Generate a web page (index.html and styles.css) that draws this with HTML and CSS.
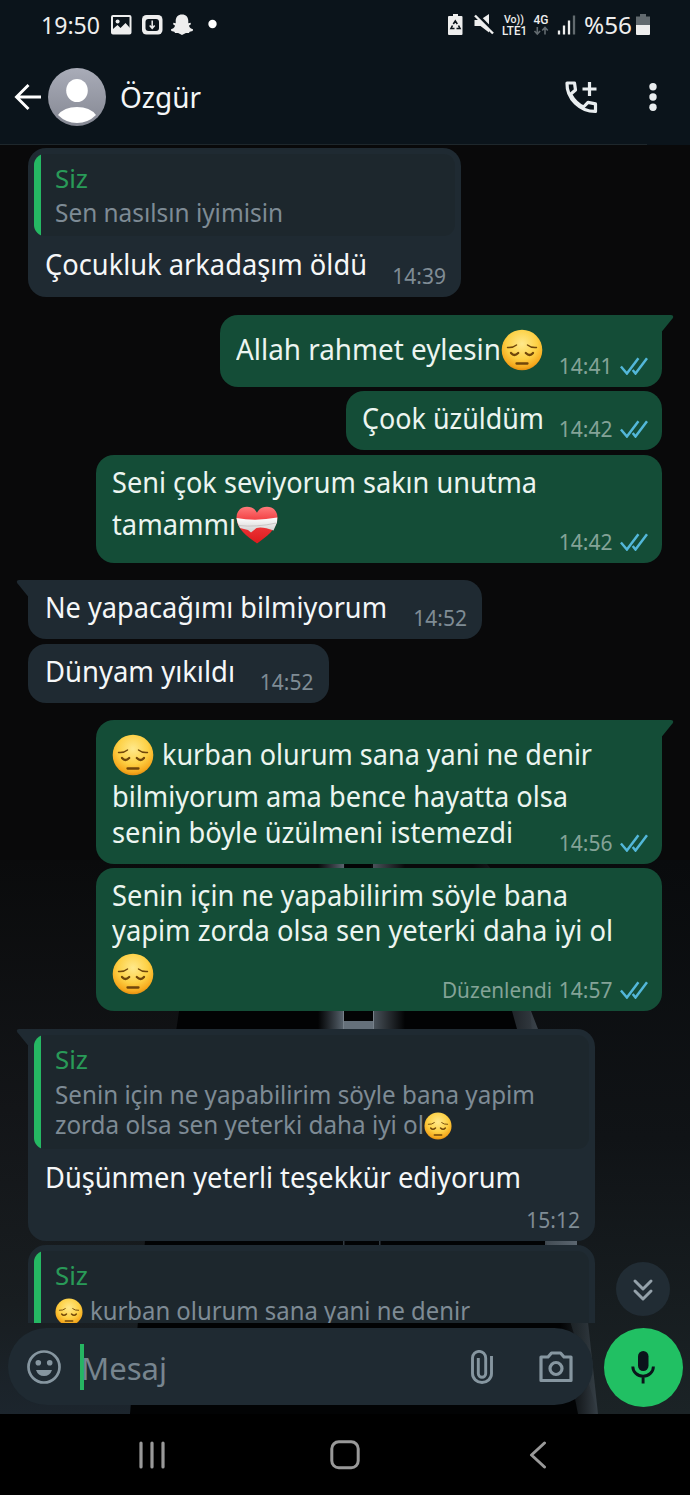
FILE: index.html
```html
<!DOCTYPE html>
<html lang="tr">
<head>
<meta charset="utf-8">
<title>Özgür</title>
<link rel="stylesheet" href="styles.css">
</head>
<body>
<svg class="defs" width="0" height="0" aria-hidden="true">
  <defs>
    <radialGradient id="face" cx="50%" cy="35%" r="68%">
      <stop offset="0" stop-color="#ffe98c"/><stop offset=".55" stop-color="#fdd044"/><stop offset=".85" stop-color="#f6a91d"/><stop offset="1" stop-color="#d9820c"/>
    </radialGradient>
    <linearGradient id="red" x1="0" y1="0" x2="0" y2="1"><stop offset="0" stop-color="#ff7b7b"/><stop offset=".4" stop-color="#f13b3e"/><stop offset="1" stop-color="#dd1a1d"/></linearGradient>
    <linearGradient id="band" x1="0" y1="0" x2="0" y2="1"><stop offset="0" stop-color="#fff"/><stop offset="1" stop-color="#cfcdcd"/></linearGradient>
    <linearGradient id="avatar" x1="0" y1="0" x2="0" y2="1"><stop offset="0" stop-color="#a9acb8"/><stop offset="1" stop-color="#858893"/></linearGradient>
    <symbol id="sad" viewBox="0 0 42 42">
      <circle cx="21" cy="21" r="20.3" fill="url(#face)"/>
      <g fill="none" stroke="#70460a" stroke-linecap="round">
        <path stroke-width="1.4" d="M6.500 18.500Q12 19 15.500 16M26.500 16Q30 19 35.500 18.500"/>
        <path stroke-width="2.300" d="M10 24Q13.200 28 17.200 24M24.800 24Q28.800 28 32 24"/>
        <path stroke-width="2.300" d="M15.500 34.500H26.500"/>
      </g>
    </symbol>
    <symbol id="heart" viewBox="0 0 42 38">
      <path fill="url(#red)" d="M21 37.500C12 31 .5 23 .5 11.500C.5 4.500 5.500.7 11 .7c4.500 0 8 2 10 6c2-4 5.500-6 10-6c5.500 0 10.500 3.800 10.500 10.800C41.500 23 30 31 21 37.500Z"/>
      <path fill="url(#band)" d="M.5 12Q20 15.500 41.300 11.500L41 16.500L37.500 24.500Q27 20.500 20.500 22L15 26.500L12 24L4 22Q1 17.500.5 12Z"/>
      <path fill="none" stroke="#bdb8b8" stroke-width=".7" d="M2.500 19.500Q20 21.500 40.500 17"/>
    </symbol>
    <symbol id="ticks" viewBox="0 0 28 18">
      <path fill="none" stroke="#53b7d9" stroke-width="2.500" d="M.9 9.500l6 7L18.400 1.200M12.700 13l2.800 3.500L27 1.200"/>
    </symbol>
    <symbol id="tail" viewBox="0 0 15 20"><path d="M15 0H3Q-.5.5 1.500 3.500L12.500 17H15Z"/></symbol>
  </defs>
</svg>

<div class="phone">
  <header class="top">
    <div class="status">
      <span class="clock fit" data-w="59">19:50</span>
      <svg class="s-left" width="110" height="22" viewBox="0 0 110 22">
        <rect x="1" y="2" width="18.500" height="17.500" rx="1" fill="none" stroke="#eee" stroke-width="2"/>
        <circle cx="6.600" cy="7.500" r="2" fill="#eee"/>
        <path fill="#eee" d="M2 18v-3l4.500-4 3 3 5-5 4.500 5v5H2z"/>
        <rect x="31" y="1" width="20.500" height="19.500" rx="4.500" fill="#eee"/>
        <rect x="34.500" y="5" width="13.500" height="12" rx="3" fill="#0b141b"/>
        <path d="M41.200 6.500v7M38.700 11.500l2.500 2.800 2.500-2.800" fill="none" stroke="#eee" stroke-width="1.500"/>
        <path fill="#eee" d="M71 .5c4 0 6.300 2.700 6.300 6.500v2.200l2.300-.4.300 1.500-2 1.400c1 2.200 2.300 3 4.100 3.500l-.3 1.700-3 .8-.8 1.400-3-.1-3.900 2-3.900-2-3 .1-.8-1.400-3-.8-.3-1.700c1.800-.5 3.100-1.300 4.100-3.500l-2-1.400.3-1.500 2.300.4V7C64.700 3.200 67 .5 71 .5z"/>
        <circle cx="101.500" cy="10" r="4.200" fill="#fff"/>
      </svg>
      <svg class="s-right" width="130" height="24" viewBox="0 0 130 24">
        <path fill="#eee" d="M6 0h5v2h3.500q1 0 1 1v17q0 1-1 1h-12.500q-1 0-1-1V3q0-1 1-1H6z"/>
        <path fill="none" stroke="#0b141b" stroke-width="1.600" d="M6.300 10l2-3 2 3M11.500 11.500l1.500 3h-3.500M7.500 14.500H4l1.500-3"/>
        <path fill="#eee" d="M27.500 6h5.500L42 0v18.500l-8.500-6.500h-6z"/>
        <path stroke="#0b141b" stroke-width="3" d="M30 .5L48 18.500"/>
        <path stroke="#eee" stroke-width="2.400" d="M28 1.500L46 19.500"/>
        <g fill="#eee" font-family="Roboto, sans-serif" font-weight="500">
          <text x="57" y="9" font-size="10" textLength="20" lengthAdjust="spacingAndGlyphs">Vo))</text>
          <text x="55" y="20.500" font-size="12" textLength="25" lengthAdjust="spacingAndGlyphs">LTE1</text>
          <text x="86.500" y="9.500" font-size="12" textLength="15" lengthAdjust="spacingAndGlyphs">4G</text>
        </g>
        <path fill="none" stroke="#626a6f" stroke-width="1.600" d="M90.300 13v7M87.500 17l2.800 3 2.800-3M98 20.500v-7M95.200 16.500l2.800-3 2.800 3"/>
        <path stroke="#eee" stroke-width="2.300" d="M112 20.500v-4M117 20.500v-9M122 20.500v-14"/>
        <path stroke="#626a6f" stroke-width="2.300" d="M127 20.500V1.500"/>
      </svg>
      <span class="percent fit" data-w="48">%56</span>
      <svg class="battery" width="14" height="22" viewBox="0 0 14 22"><path fill="#626a6f" d="M4 0h6v2.500h4V11H0V2.500h4z"/><path fill="#eee" d="M0 11h14v9q0 1-1 1H1q-1 0-1-1z"/></svg>
    </div>
    <div class="bar">
      <svg class="back" width="28" height="28" viewBox="0 0 28 28"><path fill="none" stroke="#fff" stroke-width="2.900" d="M14.500 2L2.500 14l12 12M2.500 14H27"/></svg>
      <svg class="avatar" width="58" height="58" viewBox="0 0 58 58"><circle cx="29" cy="29" r="29" fill="url(#avatar)"/><ellipse cx="29" cy="22.500" rx="10.800" ry="11.600" fill="#fff"/><path fill="#fff" d="M10 47Q16 39 29 39T48 47Q40 55 29 55T10 47z"/></svg>
      <span class="name fit" data-w="81">Özgür</span>
      <svg class="call" width="34" height="34" viewBox="0 0 34 34"><g fill="none" stroke="#e9edef" stroke-width="3.200" stroke-linejoin="round"><path d="M3 3h7.500l1 7-5 4.300C10 20.500 14 24.500 19.500 27l4.500-4.600 7.500 1.500v7.500C16 31.500 2.500 18.500 3 3z"/><path d="M25.500 2v14M18.500 9h14"/></g></svg>
      <svg class="more" width="8" height="28" viewBox="0 0 8 28" fill="#e9edef"><circle cx="4" cy="3.800" r="3.700"/><circle cx="4" cy="14" r="3.700"/><circle cx="4" cy="24.200" r="3.700"/></svg>
    </div>
  </header>

  <main class="room">
    <svg class="wallpaper" width="690" height="1269" viewBox="0 145 690 1269">
      <defs>
        <linearGradient id="side" x1="0" y1="0" x2="0" y2="1"><stop offset="0" stop-color="#0a0b0c"/><stop offset=".45" stop-color="#131518"/><stop offset=".8" stop-color="#181d20"/><stop offset="1" stop-color="#1c252d"/></linearGradient>
        <linearGradient id="glowl"><stop offset="0" stop-color="#4c5863" stop-opacity="0"/><stop offset="1" stop-color="#5b6670"/></linearGradient>
        <linearGradient id="legedge"><stop offset="0" stop-color="#262e34" stop-opacity="0"/><stop offset="1" stop-color="#363f46"/></linearGradient>
        <linearGradient id="glowr"><stop offset="0" stop-color="#4a535b"/><stop offset="1" stop-color="#4a535b" stop-opacity="0"/></linearGradient>
        <linearGradient id="rightside" x1="0" y1="0" x2="0" y2="1"><stop offset="0" stop-color="#090b0d"/><stop offset=".5" stop-color="#101316"/><stop offset="1" stop-color="#1b2326"/></linearGradient>
      </defs>
      <rect y="145" width="690" height="1269" fill="#09090a"/>
      <rect y="860" width="200" height="554" fill="url(#side)"/>
      <rect x="520" y="860" width="170" height="554" fill="url(#rightside)"/>
      <path fill="#020304" d="M180 1005h350l16 236 52 173H130l15-173z"/>
      <path fill="url(#glowl)" d="M318 864h26v165h-26z"/>
      <path fill="url(#glowr)" d="M373 864h32v165h-32z"/>
      <path fill="#030405" d="M345 864h26v157h-26z"/>
      <path fill="#65707a" d="M344 1021h29v8h-29z"/>
      <path fill="none" stroke="#77818a" d="M343.500 1011v18M373.500 1011v18"/>
      <path fill="url(#glowl)" d="M473 864h14l4 5h-18zM512 1011h19l7 18h-21zM545 1241h32v5h-32z"/>
      <path fill="url(#legedge)" d="M560 1322h28l10 92h-20z"/>
      <path fill="#303940" d="M343 1241h1.500v5H343zM379 1241h1.500v5h-1.500z"/>
    </svg>

    <section class="chat">
      <article class="bubble in w433 quoted first">
        <div class="quote"><div class="who"><span class="fit" data-w="33">Siz</span></div><div class="ql"><span class="fit" data-w="228">Sen nasılsın iyimisin</span></div></div>
        <p class="line"><span class="fit" data-w="322">Çocukluk arkadaşım öldü</span></p>
        <div class="meta">14:39</div>
      </article>

      <article class="bubble out w442 group">
        <svg class="tail"><use href="#tail"/></svg>
        <p class="line emo"><span class="fit" data-w="265">Allah rahmet eylesin</span><svg class="e"><use href="#sad"/></svg></p>
        <div class="meta">14:41<svg class="t"><use href="#ticks"/></svg></div>
      </article>
      <article class="bubble out w315">
        <p class="line"><span class="fit" data-w="182">Çook üzüldüm</span></p>
        <div class="meta">14:42<svg class="t"><use href="#ticks"/></svg></div>
      </article>
      <article class="bubble out w565">
        <p class="line"><span class="fit" data-w="425">Seni çok seviyorum sakın unutma</span></p>
        <p class="line emo"><span class="fit" data-w="124">tamammı</span><svg class="e h"><use href="#heart"/></svg></p>
        <div class="meta">14:42<svg class="t"><use href="#ticks"/></svg></div>
      </article>

      <article class="bubble in w454 group">
        <svg class="tail"><use href="#tail"/></svg>
        <p class="line"><span class="fit" data-w="342">Ne yapacağımı bilmiyorum</span></p>
        <div class="meta">14:52</div>
      </article>
      <article class="bubble in w300">
        <p class="line"><span class="fit" data-w="190">Dünyam yıkıldı</span></p>
        <div class="meta">14:52</div>
      </article>

      <article class="bubble out w565 group">
        <svg class="tail"><use href="#tail"/></svg>
        <p class="line emo"><svg class="e"><use href="#sad"/></svg><span class="fit after" data-w="430">kurban olurum sana yani ne denir</span></p>
        <p class="line"><span class="fit" data-w="456">bilmiyorum ama bence hayatta olsa</span></p>
        <p class="line"><span class="fit" data-w="401">senin böyle üzülmeni istemezdi</span></p>
        <div class="meta">14:56<svg class="t"><use href="#ticks"/></svg></div>
      </article>
      <article class="bubble out w565">
        <p class="line"><span class="fit" data-w="456">Senin için ne yapabilirim söyle bana</span></p>
        <p class="line"><span class="fit" data-w="501">yapim zorda olsa sen yeterki daha iyi ol</span></p>
        <p class="line emo"><svg class="e"><use href="#sad"/></svg></p>
        <div class="meta"><span class="edited"><span class="fit" data-w="110">Düzenlendi</span></span>14:57<svg class="t"><use href="#ticks"/></svg></div>
      </article>

      <article class="bubble in w567 quoted group long">
        <svg class="tail"><use href="#tail"/></svg>
        <div class="quote"><div class="who"><span class="fit" data-w="33">Siz</span></div><div class="ql"><span class="fit" data-w="480">Senin için ne yapabilirim söyle bana yapim</span></div><div class="ql"><span class="fit" data-w="369">zorda olsa sen yeterki daha iyi ol</span><svg class="e q"><use href="#sad"/></svg></div></div>
        <p class="line"><span class="fit" data-w="476">Düşünmen yeterli teşekkür ediyorum</span></p>
        <div class="meta">15:12</div>
      </article>
      <article class="bubble in w567 quoted">
        <div class="quote"><div class="who"><span class="fit" data-w="33">Siz</span></div><div class="ql"><svg class="e q"><use href="#sad"/></svg><span class="fit qafter" data-w="380">kurban olurum sana yani ne denir</span></div><div class="ql"></div></div>
      </article>
    </section>

    <div class="jump"><svg width="24" height="24" viewBox="0 0 24 24"><path fill="none" stroke="#94a1aa" stroke-width="3" stroke-linecap="round" stroke-linejoin="round" d="M4 3l8 8 8-8M4 13l8 8 8-8"/></svg></div>

    <footer class="composer">
      <div class="field">
        <svg width="34" height="34" viewBox="0 0 34 34"><circle cx="17" cy="17" r="15.500" fill="none" stroke="#8696a0" stroke-width="2.700"/><circle cx="11.300" cy="12.800" r="2.800" fill="#8696a0"/><circle cx="22.700" cy="12.800" r="2.800" fill="#8696a0"/><path fill="#8696a0" d="M9 20h16q-2 6-8 6t-8-6z"/></svg>
        <i class="caret"></i>
        <span class="hint fit" data-w="86">Mesaj</span>
        <svg class="clip" width="22" height="34" viewBox="0 0 22 34"><path fill="none" stroke="#8696a0" stroke-width="2.900" d="M20.500 6v17.500a9.500 9 0 0 1-19 0V8a6.600 6.600 0 0 1 13.200 0v15.500a3.700 3.700 0 0 1-7.400 0V8"/></svg>
        <svg class="cam" width="34" height="32" viewBox="0 0 34 32"><g fill="none" stroke="#8696a0" stroke-width="3.200" stroke-linejoin="round"><path d="M2 6h7l3.500-4h9L25 6h7v23.500H2z"/><circle cx="17" cy="17.500" r="6"/></g></svg>
      </div>
      <div class="mic"><svg width="24" height="34" viewBox="0 0 24 34"><rect x="7" y="1" width="10.500" height="20" rx="5.200" fill="#0b141b"/><path fill="none" stroke="#0b141b" stroke-width="2.900" d="M1.800 16.500a10.300 9.700 0 0 0 20.600 0M12.100 26v7.500"/></svg></div>
    </footer>
  </main>

  <nav class="keys">
    <svg width="26" height="28" viewBox="0 0 26 28"><path stroke="#999" stroke-width="3.200" stroke-linecap="round" d="M2 2v24M13 2v24M24 2v24"/></svg>
    <svg width="30" height="30" viewBox="0 0 30 30"><rect x="1.800" y="1.800" width="26.400" height="26" rx="7" fill="none" stroke="#999" stroke-width="3"/></svg>
    <svg width="18" height="28" viewBox="0 0 18 28"><path fill="none" stroke="#999" stroke-width="3" stroke-linecap="round" stroke-linejoin="round" d="M15.500 2L2.500 14l13 12"/></svg>
  </nav>
</div>
<script src="fit.js"></script>
</body>
</html>
```
FILE: styles.css
```css
* { box-sizing: border-box; }
body { margin: 0; background: #000; font-family: "Noto Sans", "Open Sans", sans-serif; }
svg { display: block; flex: none; }
.defs { position: absolute; }
.phone { width: 690px; height: 1495px; display: flex; flex-direction: column; overflow: hidden; color: #e9edef; }
.fit { display: inline-block; white-space: pre; transform-origin: 0 50%; flex: none; }

.top { height: 145px; background: linear-gradient(#1e272c, #1e272c) 0 100% / 647px 1px no-repeat, #0b141b; flex: none; }
.status { height: 50px; display: flex; align-items: flex-start; padding: 14px 0 0 41px; }
.clock, .percent { font-size: 23.500px; line-height: 22px; color: #eee; }
.s-left { margin-left: 11px; }
.s-right { margin-left: 226px; }
.percent { margin-left: 7px; }
.battery { margin-left: 4px; }
.bar { height: 94px; display: flex; align-items: center; padding-left: 14px; }
.avatar { margin-left: 6px; }
.name { font-size: 29.500px; line-height: 36px; color: #f4f6f7; margin-left: 14px; }
.call { margin-left: 363px; }
.more { margin-left: 51px; }

.room { height: 1269px; position: relative; display: flex; flex-direction: column; flex: none; }
.wallpaper { position: absolute; inset: 0; }
.chat { position: relative; height: 1177.500px; overflow: hidden; display: flex; flex-direction: column; padding: 2.500px 28.500px 0 28px; flex: none; }
.bubble { position: relative; flex: none; display: flex; flex-direction: column; padding: 10px 15px 9px 16px; border-radius: 18px; margin-top: 4.300px; }
.bubble.group { margin-top: 17.600px; }
.bubble.first { margin-top: 0; }
.in { background: #1f2a32; color: #f5f7f8; padding-left: 17px; }
.out { background: #144d37; color: #ecf5f0; align-self: flex-end; }
.in.group { border-top-left-radius: 0; }
.out.group { border-top-right-radius: 0; }
.w433 { width: 433px; }
.w442 { width: 442px; }
.w315 { width: 315.500px; }
.w565 { width: 565.500px; }
.w454 { width: 454px; }
.w300 { width: 300.500px; }
.w567 { width: 567px; }
.tail { position: absolute; top: 0; width: 15px; height: 20px; }
.in .tail { left: -12px; fill: #1f2a32; }
.out .tail { right: -12px; fill: #144d37; transform: scaleX(-1); }
.line { margin: 0; height: 35.500px; line-height: 35.500px; font-size: 28.500px; display: flex; }
.emo { height: 49px; padding-top: 7px; }
.e { width: 42px; height: 42px; margin-top: -3px; }
.e.h { height: 38px; margin-top: -1px; }
.after { margin-left: 8px; }
.meta { display: flex; align-self: flex-end; height: 24px; line-height: 24px; margin-top: -19.500px; font-size: 21px; color: #84a397; }
.in .meta { color: #7f8c95; }
.t { width: 28px; height: 18px; margin: 3px -1px 0 7px; }
.edited { font-size: 21.500px; margin-right: 7px; display: flex; }
.quoted { padding-top: 6px; }
.quote { position: relative; margin: 0 -8.500px 11px -11px; padding: 9.300px 10px 7.700px 21px; border-radius: 11px; background: linear-gradient(90deg, #25b863 7px, #1d272d 7px); color: #7e8b95; font-size: 24.500px; line-height: 30.500px; }
.who { height: 35.500px; color: #299a58; font-size: 25px; }
.ql { height: 30.500px; display: flex; }
.e.q { width: 28px; height: 28px; margin-top: 2px; }
.qafter { margin-left: 7px; }
.first .meta { margin-top: -19px; }
.long .meta { margin-top: 12.800px; }

.jump { position: absolute; left: 616px; top: 1117px; width: 54px; height: 54px; border-radius: 50%; background: #212c34; display: flex; align-items: center; justify-content: center; padding-top: 2px; }
.composer { position: relative; display: flex; align-items: flex-start; padding: 5.500px 0 0 8px; }
.field { width: 585px; height: 77px; border-radius: 39px; background: #1f2a32; display: flex; align-items: center; padding-left: 19px; }
.caret { width: 4px; height: 46px; margin-left: 19px; background: #26b562; }
.hint { font-size: 31px; line-height: 40px; color: #77858f; margin: 3px 0 0 -3px; }
.clip { margin-left: 304px; }
.cam { margin-left: 46px; }
.mic { width: 79px; height: 79px; margin-left: 10.600px; border-radius: 50%; background: #21c063; display: flex; align-items: center; justify-content: center; padding-bottom: 2px; }

.keys { flex: 1; background: #000; display: flex; align-items: center; padding-left: 139px; }
.keys svg + svg { margin-left: 165px; }
.keys svg + svg + svg { margin-left: 169px; }
```
FILE: fit.js
```js
// Condenses each run of text horizontally to its set width.
document.querySelectorAll('.fit').forEach(function (el) {
  var natural = el.getBoundingClientRect().width;
  var target = parseFloat(el.dataset.w);
  el.style.transform = 'scaleX(' + target / natural + ')';
  el.style.marginRight = (target - natural) + 'px';
});
```
